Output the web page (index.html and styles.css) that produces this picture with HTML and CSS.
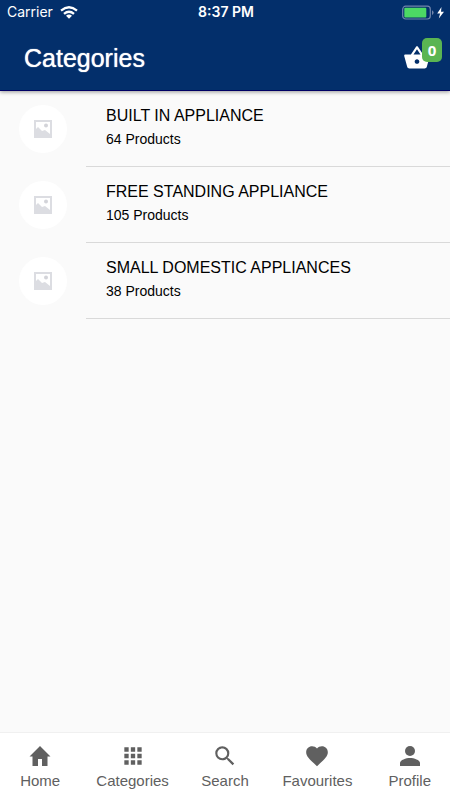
FILE: index.html
```html
<!DOCTYPE html>
<html lang="en">
<head>
<meta charset="utf-8">
<meta name="viewport" content="width=device-width, initial-scale=1">
<title>Categories</title>
<link rel="stylesheet" href="styles.css">
</head>
<body>
<svg width="0" height="0" class="sprite" aria-hidden="true">
  <symbol id="photo" viewBox="0 0 18 18">
    <path fill="#dcdde2" fill-rule="evenodd" d="M0 0h18v18H0zM2 2v7l2-2 4 4 3-1 5 4V2z"/>
    <circle cx="12" cy="5.500" r="2" fill="#d3d4d9"/>
  </symbol>
</svg>
<header class="top">
  <div class="status">
    <div class="carrier">
      <span>Carrier</span>
      <svg width="18" height="13" viewBox="0 0 18 13" aria-hidden="true"><g fill="none" stroke="#fff" stroke-width="2.300"><path d="M1 4.600Q9-2 17 4.600"/><path d="M4 7.900Q9 3.600 14 7.900"/></g><path fill="#fff" d="M6 9.800Q9 7.400 12 9.800L9 12.800z"/></svg>
    </div>
    <span class="clock">8:37 PM</span>
    <div class="power">
      <svg width="43" height="15" viewBox="0 0 43 15" aria-hidden="true"><rect x=".7" y="1.200" width="27.600" height="12.800" rx="3" fill="none" stroke="#7185ab" stroke-width="1.200"/><rect x="2.300" y="2.800" width="22" height="9.600" rx="1" fill="#4cd964"/><path d="M30 5.200q1.600.7 1.600 2.400T30 10z" fill="#7185ab"/><path d="M39.500 2L35.200 8.500h2.900L36.800 13.500 42 6.700h-3z" fill="#fff"/></svg>
    </div>
  </div>
  <div class="bar">
    <h1>Categories</h1>
    <button class="basket" type="button" aria-label="Basket, 0 items">
      <svg width="28" height="28" viewBox="0 0 24 24" aria-hidden="true"><path fill="#fff" d="M17.210 9l-4.380-6.560c-.19-.28-.51-.42-.83-.42-.32 0-.64.140-.83.430L6.790 9H2c-.55 0-1 .45-1 1 0 .09.010.18.040.27l2.540 9.270c.23.840 1 1.460 1.920 1.460h13c.92 0 1.690-.62 1.930-1.460l2.540-9.270L23 10c0-.55-.45-1-1-1h-4.790zM9 9l3-4.400L15 9H9zm3 8c-1.100 0-2-.9-2-2s.9-2 2-2 2 .9 2 2-.9 2-2 2z"/></svg>
      <span class="badge">0</span>
    </button>
  </div>
</header>
<main>
  <ul class="list">
    <li><a href="#built-in"><span class="thumb"><svg width="18" height="18" aria-hidden="true"><use href="#photo"/></svg></span><span class="info"><span class="name">BUILT IN APPLIANCE</span><span class="count">64 Products</span></span></a></li>
    <li><a href="#free-standing"><span class="thumb"><svg width="18" height="18" aria-hidden="true"><use href="#photo"/></svg></span><span class="info"><span class="name">FREE STANDING APPLIANCE</span><span class="count">105 Products</span></span></a></li>
    <li><a href="#small-domestic"><span class="thumb"><svg width="18" height="18" aria-hidden="true"><use href="#photo"/></svg></span><span class="info"><span class="name">SMALL DOMESTIC APPLIANCES</span><span class="count">38 Products</span></span></a></li>
  </ul>
</main>
<nav class="tabs">
  <ul>
    <li><a href="#home"><svg width="24" height="24" viewBox="0 0 24 24" aria-hidden="true"><path d="M10 22v-7h4v7h5.500v-9.500H22.500L12 2 1.500 12.500h3V22z"/></svg>Home</a></li>
    <li><a href="#categories"><svg width="26" height="24" viewBox="0 0 24 24" aria-hidden="true"><path d="M4 4h4v4H4zm6 0h4v4h-4zm6 0h4v4h-4zM4 10h4v4H4zm6 0h4v4h-4zm6 0h4v4h-4zM4 16h4v4H4zm6 0h4v4h-4zm6 0h4v4h-4z"/></svg>Categories</a></li>
    <li><a href="#search"><svg width="26" height="26" viewBox="0 0 24 24" aria-hidden="true"><path d="M15.500 14h-.79l-.28-.27A6.471 6.471 0 0 0 16 9.500 6.500 6.500 0 1 0 9.500 16c1.610 0 3.090-.59 4.230-1.570l.27.280v.79l5 4.990L20.490 19l-4.990-5zm-6 0C7.010 14 5 11.990 5 9.500S7.010 5 9.500 5 14 7.010 14 9.500 11.990 14 9.500 14z"/></svg>Search</a></li>
    <li><a href="#favourites"><svg width="26" height="26" viewBox="0 0 24 24" aria-hidden="true"><path d="M12 21.350l-1.450-1.320C5.400 15.360 2 12.280 2 8.500 2 5.420 4.420 3 7.500 3c1.740 0 3.410.81 4.500 2.090C13.090 3.810 14.760 3 16.500 3 19.580 3 22 5.420 22 8.500c0 3.780-3.400 6.860-8.550 11.540L12 21.350z"/></svg>Favourites</a></li>
    <li><a href="#profile"><svg width="24" height="24" viewBox="0 0 24 24" aria-hidden="true"><circle cx="12" cy="7" r="5"/><path d="M2 22v-3c0-3 6-5 10-5s10 2 10 5v3z"/></svg>Profile</a></li>
  </ul>
</nav>
</body>
</html>
```
FILE: styles.css
```css
* {
  box-sizing: border-box;
}

body {
  margin: 0;
  min-height: 100vh;
  display: flex;
  flex-direction: column;
  background: #fafafa;
  color: #000;
  font-family: "Liberation Sans", Arial, sans-serif;
}

ul {
  list-style: none;
  margin: 0;
  padding: 0;
}

a {
  color: inherit;
  text-decoration: none;
}

svg {
  display: block;
}

.sprite {
  position: absolute;
}

.top {
  background: #032f6b;
  border-bottom: 1px solid #000064;
  box-shadow: 0 1px 4px rgba(0, 0, 0, 0.4);
  color: #fff;
}

.status {
  display: grid;
  grid-template-columns: 1fr auto 1fr;
  align-items: center;
  height: 24px;
  padding: 0 5px 0 7px;
  font: 14px/24px Inter, sans-serif;
}

.carrier {
  display: flex;
  align-items: center;
  gap: 7px;
}

.clock {
  font-weight: 600;
}

.power {
  justify-self: end;
}

.bar {
  display: flex;
  align-items: center;
  justify-content: space-between;
  height: 66px;
  padding: 2px 19px 0 24px;
}

h1 {
  margin: 0;
  font-size: 25px;
  font-weight: 400;
  line-height: 32px;
  text-shadow: 0 0 1px #fff;
}

.basket {
  position: relative;
  padding: 0;
  border: 0;
  background: none;
}

.badge {
  position: absolute;
  top: -6px;
  right: -11px;
  width: 20px;
  border-radius: 5px;
  background: #5ab552;
  color: #fff;
  font: 700 15px/24px "Open Sans", sans-serif;
  text-align: center;
}

main {
  flex: 1;
}

.list a {
  display: flex;
}

.thumb {
  display: grid;
  place-items: center;
  width: 48px;
  height: 48px;
  margin: 14px 19px;
  border-radius: 50%;
  background: #fff;
}

.info {
  flex: 1;
  display: flex;
  flex-direction: column;
  gap: 3px;
  height: 76px;
  padding: 15px 20px 0;
  border-bottom: 1px solid #d9d9d9;
}

.name {
  font-size: 16px;
  line-height: 20px;
}

.count {
  font-size: 14px;
  line-height: 20px;
}

.tabs {
  overflow: hidden;
  background: #fff;
  border-top: 1px solid #f0f0f0;
}

.tabs ul {
  display: grid;
  grid-template-columns: repeat(5, 1fr);
  margin: 0 -6px;
}

.tabs a {
  display: flex;
  flex-direction: column;
  align-items: center;
  padding: 10px 0 9px;
  color: #606060;
  font-size: 15px;
  line-height: 20px;
}

.tabs svg {
  height: 26px;
  margin-bottom: 2px;
  fill: #606060;
}
```
